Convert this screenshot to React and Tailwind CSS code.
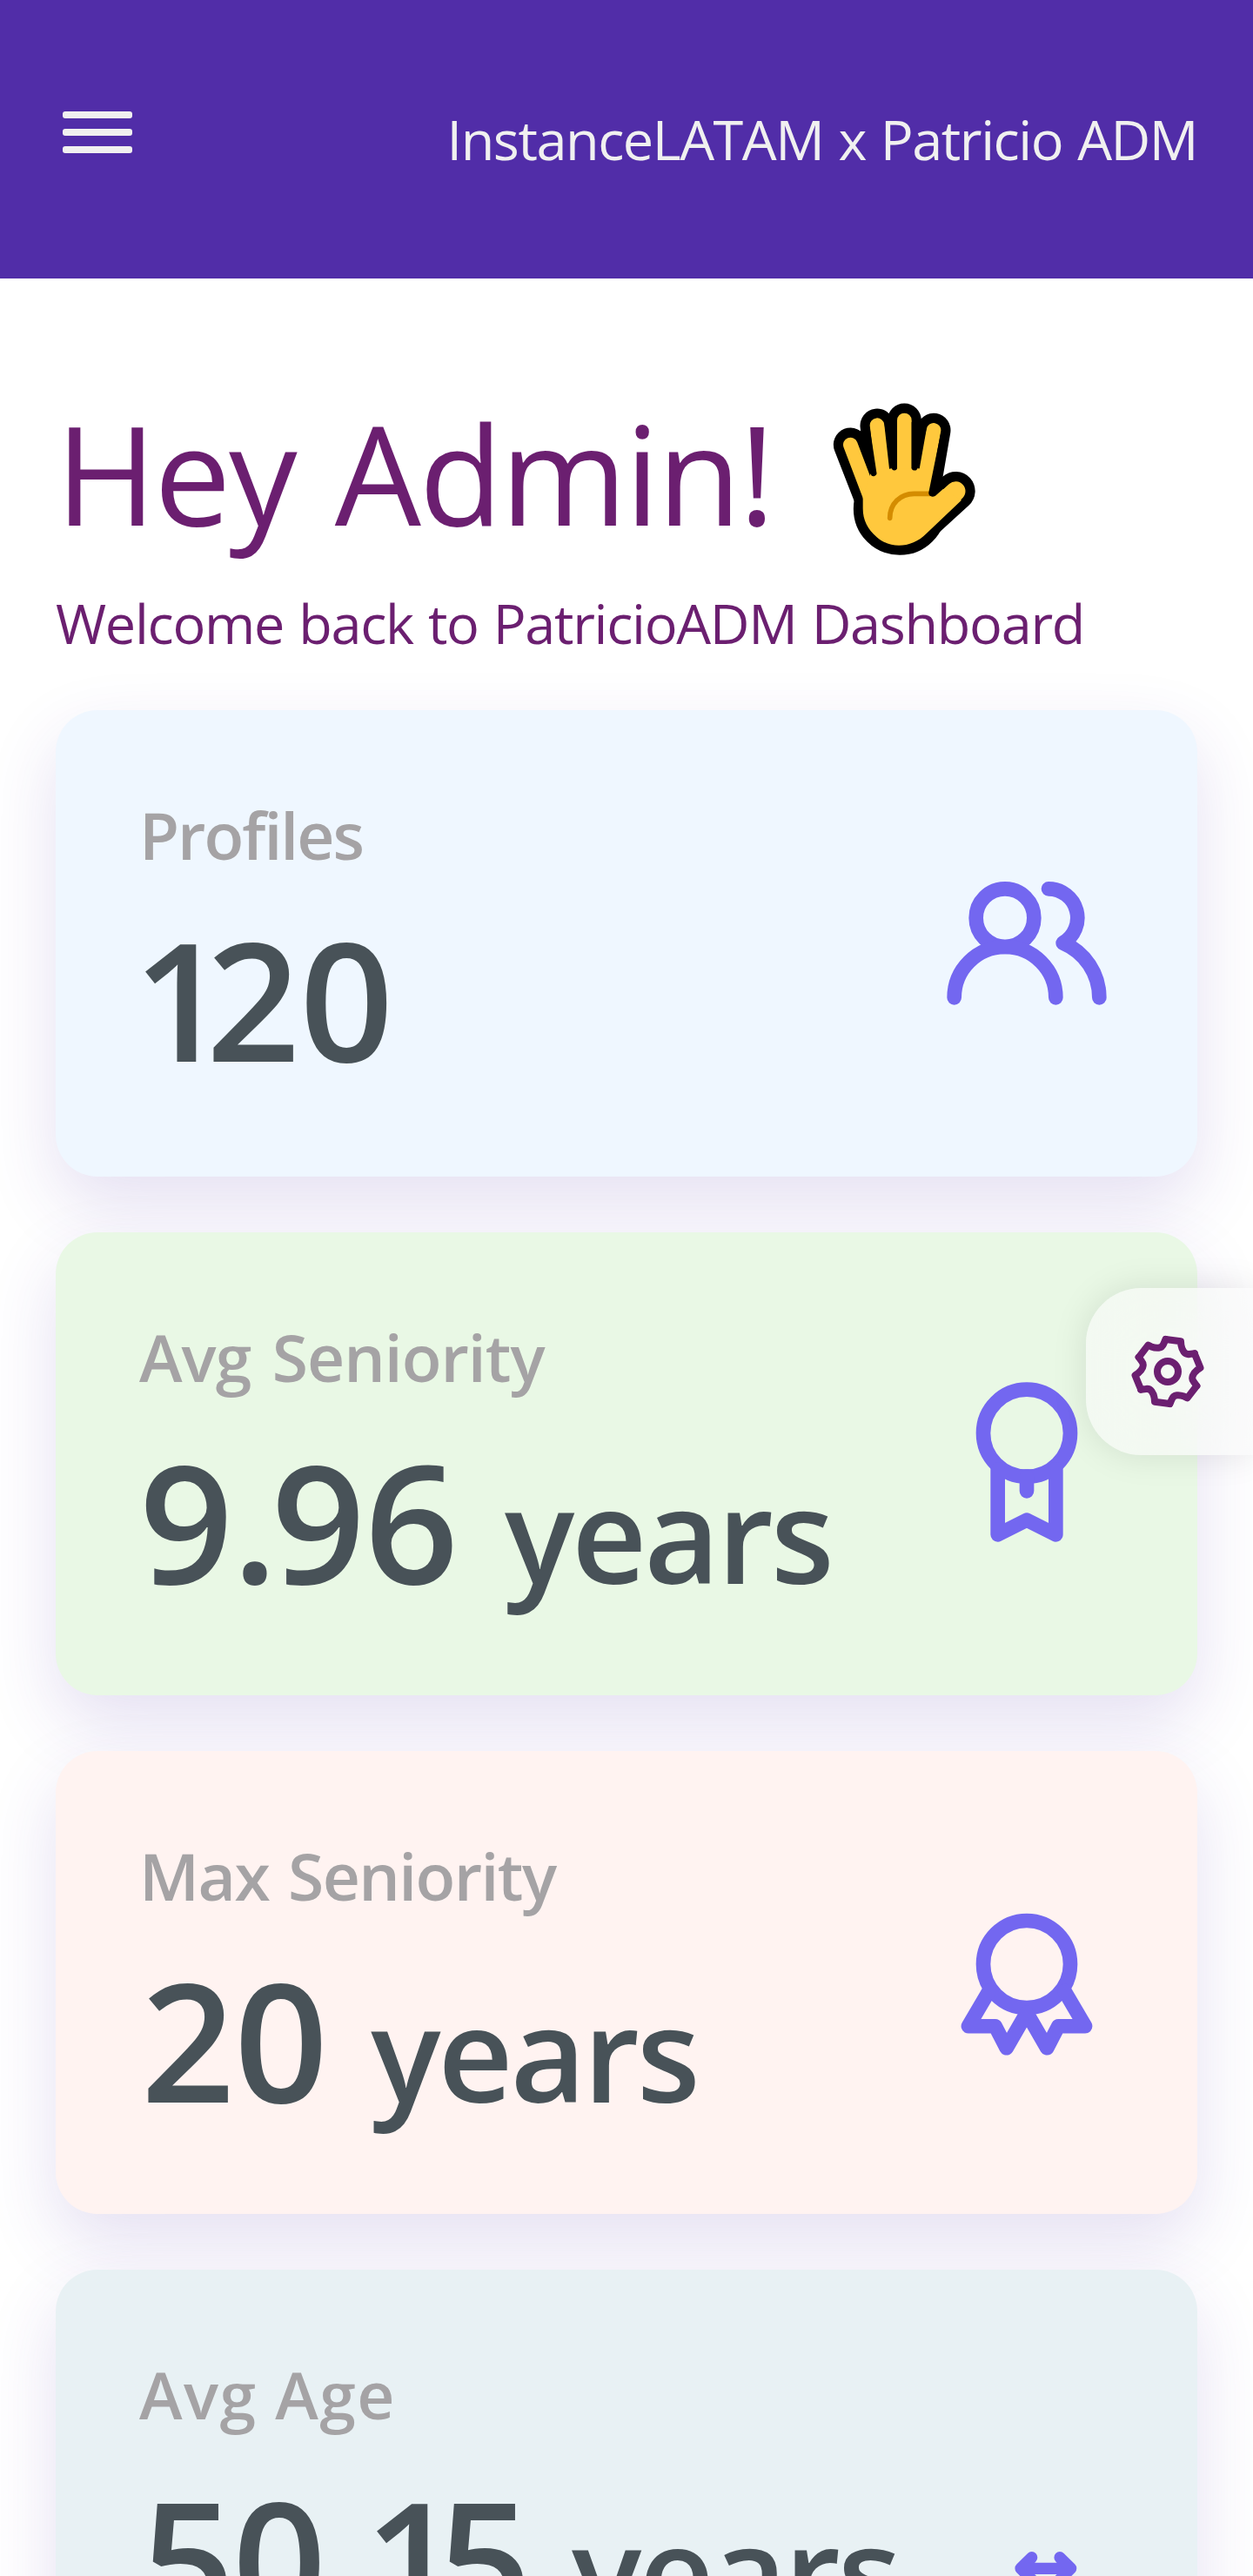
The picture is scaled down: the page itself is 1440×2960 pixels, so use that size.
import React from "react";

function UsersIcon() {
  return (
    <svg viewBox="0 0 24 24" className="size-[200px]" fill="none" stroke="currentColor" strokeWidth="2" strokeLinecap="round" strokeLinejoin="round">
      <circle cx="9" cy="8" r="4" />
      <path d="M2 19a7 7 0 0 1 14 0M15 4a4 4 0 0 1 2 7.46A8.2 8.2 0 0 1 22 19" />
    </svg>
  );
}

function RibbonIcon() {
  return (
    <svg viewBox="0 0 24 24" className="size-[200px]" fill="none" stroke="currentColor" strokeWidth="2" strokeLinecap="round" strokeLinejoin="round">
      <circle cx="12" cy="8" r="6" />
      <path d="M8 13v9l4-2 4 2v-9M12 14v2" />
    </svg>
  );
}

function RosetteIcon() {
  return (
    <svg viewBox="0 0 24 24" className="size-[200px]" fill="none" stroke="currentColor" strokeWidth="2" strokeLinecap="round" strokeLinejoin="round">
      <circle cx="12" cy="9" r="6" />
      <path d="M6.8 12.7 3.95 17.55h3.7l1.55 3L12 15.7l2.8 4.85 1.55-3h3.7L17.2 12.7" />
    </svg>
  );
}

function RangeIcon() {
  return (
    <svg viewBox="0 0 200 200" className="size-[200px]" fill="none" stroke="currentColor" strokeWidth="13.2" strokeLinecap="round" strokeLinejoin="round">
      <path d="M105.7 166.7 93 179.3l12.7 12.7M138 166.7l12.7 12.6L138 192M93 179.3h57.7" />
    </svg>
  );
}

function GearIcon() {
  return (
    <svg viewBox="-126 -126 252 252" className="size-[84px]" fill="none" stroke="currentColor" strokeWidth="24" strokeLinecap="round" strokeLinejoin="round">
      <circle r="36" />
      {[0, 60, 120, 180, 240, 300].map((angle) => (
        <path key={angle} transform={`rotate(${angle})`} d="M-7-111 45-104 46-92C49-74 58-57 75-60L93-62" />
      ))}
    </svg>
  );
}

function WaveIcon() {
  return (
    <svg viewBox="160 90 510 545" className="w-[170px] h-[181.67px]" fill="none" strokeLinecap="round" strokeLinejoin="round">
      <path
        d="M227 243 300 430V470A95 95 0 0 0 460 535L591 403 508 410 514 193 413 160 318 177Z"
        fill="#000"
      />
      <g stroke="#000">
        <path strokeWidth="117" d="M227 243 303 438M319 177 342 370M413 159V370M514 193 475 420" />
        <path strokeWidth="134" d="M590 403 475 508" />
        <circle cx="397" cy="464" r="101" strokeWidth="117" fill="#000" />
      </g>
      <g stroke="#ffc83d" fill="#ffc83d">
        <path strokeWidth="50" d="M227 243 298 430M319 176 342 380M413 159V380M514 193 472 430" />
        <path strokeWidth="67" d="M590 403 468 512" />
        <path stroke="none" d="M270 425 297 342 318 340 367 325H388L438 325H460L505 330 497 415 545 395 610 434 490 548C440 600 365 603 318 562C287 535 270 504 270 463Z" />
      </g>
      <path fill="#000" d="M252 231 315 338A9 9 0 0 1 298 346ZM344 170 386 320A9 9 0 0 1 369 322ZM388 165V322A9 9 0 0 1 369 322L344 170ZM438 165V320A10 10 0 0 0 458 323L489 188ZM294 186 317 338A10 10 0 0 1 297 344L252 231Z" />
      <path stroke="#d48c00" strokeWidth="17" d="M363 496C363 446 400 412 446 412H500" />
      <path fill="#000" d="M540 196 497 407C495 420 508 426 520 419L569 376 542 354Z" />
    </svg>
  );
}

const cards = [
  {
    label: "Profiles", value: "120", color: "bg-[#eff7ff]", size: "h-[536px]", Icon: UsersIcon,
    pos: "mt-[76px]", labelTracking: "tracking-[-2px]", indent: "-ml-[7px]",
  },
  {
    label: "Avg Seniority", value: "9.96", unit: "years", color: "bg-[#e9f8e5]", size: "h-[532px]", Icon: RibbonIcon,
    pos: "mt-[68px]", labelTracking: "tracking-[-1px] [word-spacing:6px]", indent: "ml-0", unitGap: "ml-[54px]",
  },
  {
    label: "Max Seniority", value: "20", unit: "years", color: "bg-[#fff3f1]", size: "h-[532px]", Icon: RosetteIcon,
    pos: "mt-[73.7px]", labelTracking: "tracking-[-1.6px] [word-spacing:4px]", indent: "ml-[2px]", unitGap: "ml-[50px]",
  },
  {
    label: "Avg Age", value: "50.15", unit: "years", color: "bg-[#e8f1f4]", size: "h-[532px]", Icon: RangeIcon,
    pos: "mt-[68px]", labelTracking: "tracking-[1.4px]", indent: "ml-[2px]", unitGap: "ml-[49px]",
  },
];

const digitTracking = { 1: "tracking-[-24px]", 5: "tracking-[-3px]", ".": "tracking-[-7px]" };

function StatCard({ label, value, unit, color, size, Icon, pos, labelTracking, indent, unitGap }) {
  return (
    <section className={`flex shrink-0 justify-between rounded-[48px] px-24 pt-24 shadow-[0_32px_80px_rgba(81,45,168,0.15)] ${color} ${size}`}>
      <div className="-mt-[3px] min-w-0 whitespace-nowrap font-semibold">
        <h2 className={`text-[75px] leading-[100px] text-[#a5a3a5] ${labelTracking}`}>{label}</h2>
        <p className={`mt-[10px] text-[189px] leading-[256px] text-[#485258] ${indent}`}>
          {[...value].map((char, i) => (
            <span key={i} className={digitTracking[char] || "tracking-[-1px]"}>
              {char}
            </span>
          ))}
          {unit && <span className={`text-[150px] tracking-[-3.2px] ${unitGap}`}>{unit}</span>}
        </p>
      </div>
      <div className={`shrink-0 text-[#7367f0] ${pos}`}>
        <Icon />
      </div>
    </section>
  );
}

export default function App() {
  return (
    <div className="relative h-[2960px] w-[1440px] overflow-hidden bg-white font-['Open_Sans','Noto_Sans',sans-serif]">
      <header className="flex h-80 justify-between bg-[#512da8] pl-[72px] pr-16 text-[#f0f0f0]">
        <button className="mt-32 flex h-12 w-20 flex-col justify-between" aria-label="Menu">
          <span className="h-2 w-full rounded-[3px] bg-[#f0f0f0]" />
          <span className="h-2 w-full rounded-[3px] bg-[#f0f0f0]" />
          <span className="h-2 w-full rounded-[3px] bg-[#f0f0f0]" />
        </button>
        <p className="mt-[117px] whitespace-nowrap text-[63px] leading-[86px] tracking-[-1.45px] [word-spacing:2px]">InstanceLATAM x Patricio ADM</p>
      </header>
      <main className="flex flex-col px-16">
        <div className="flex h-[360px] items-start text-[#6b1f70]">
          <h1 className="mt-[116px] w-[891px] whitespace-nowrap text-[157px] leading-[214px] tracking-[-2.4px] [word-spacing:7px]">Hey Admin!</h1>
          <div className="mt-[140px]">
            <WaveIcon />
          </div>
        </div>
        <p className="-mt-[7px] h-[143px] whitespace-nowrap text-[63px] leading-[86px] tracking-[-1.3px] [word-spacing:2px] text-[#6b1f70]">
          Welcome back to PatricioADM Dashboard
        </p>
        <div className="flex flex-col gap-16">
          {cards.map((card) => (
            <StatCard key={card.label} {...card} />
          ))}
        </div>
      </main>
      <button
        className="absolute right-0 top-[1480px] flex h-48 w-48 items-center justify-start rounded-l-[64px] bg-[#fafafa]/60 pl-[52px] text-[#6b1f70] shadow-[0_0_40px_rgba(0,0,0,0.1)] backdrop-blur-[40px]"
        aria-label="Settings"
      >
        <GearIcon />
      </button>
    </div>
  );
}
